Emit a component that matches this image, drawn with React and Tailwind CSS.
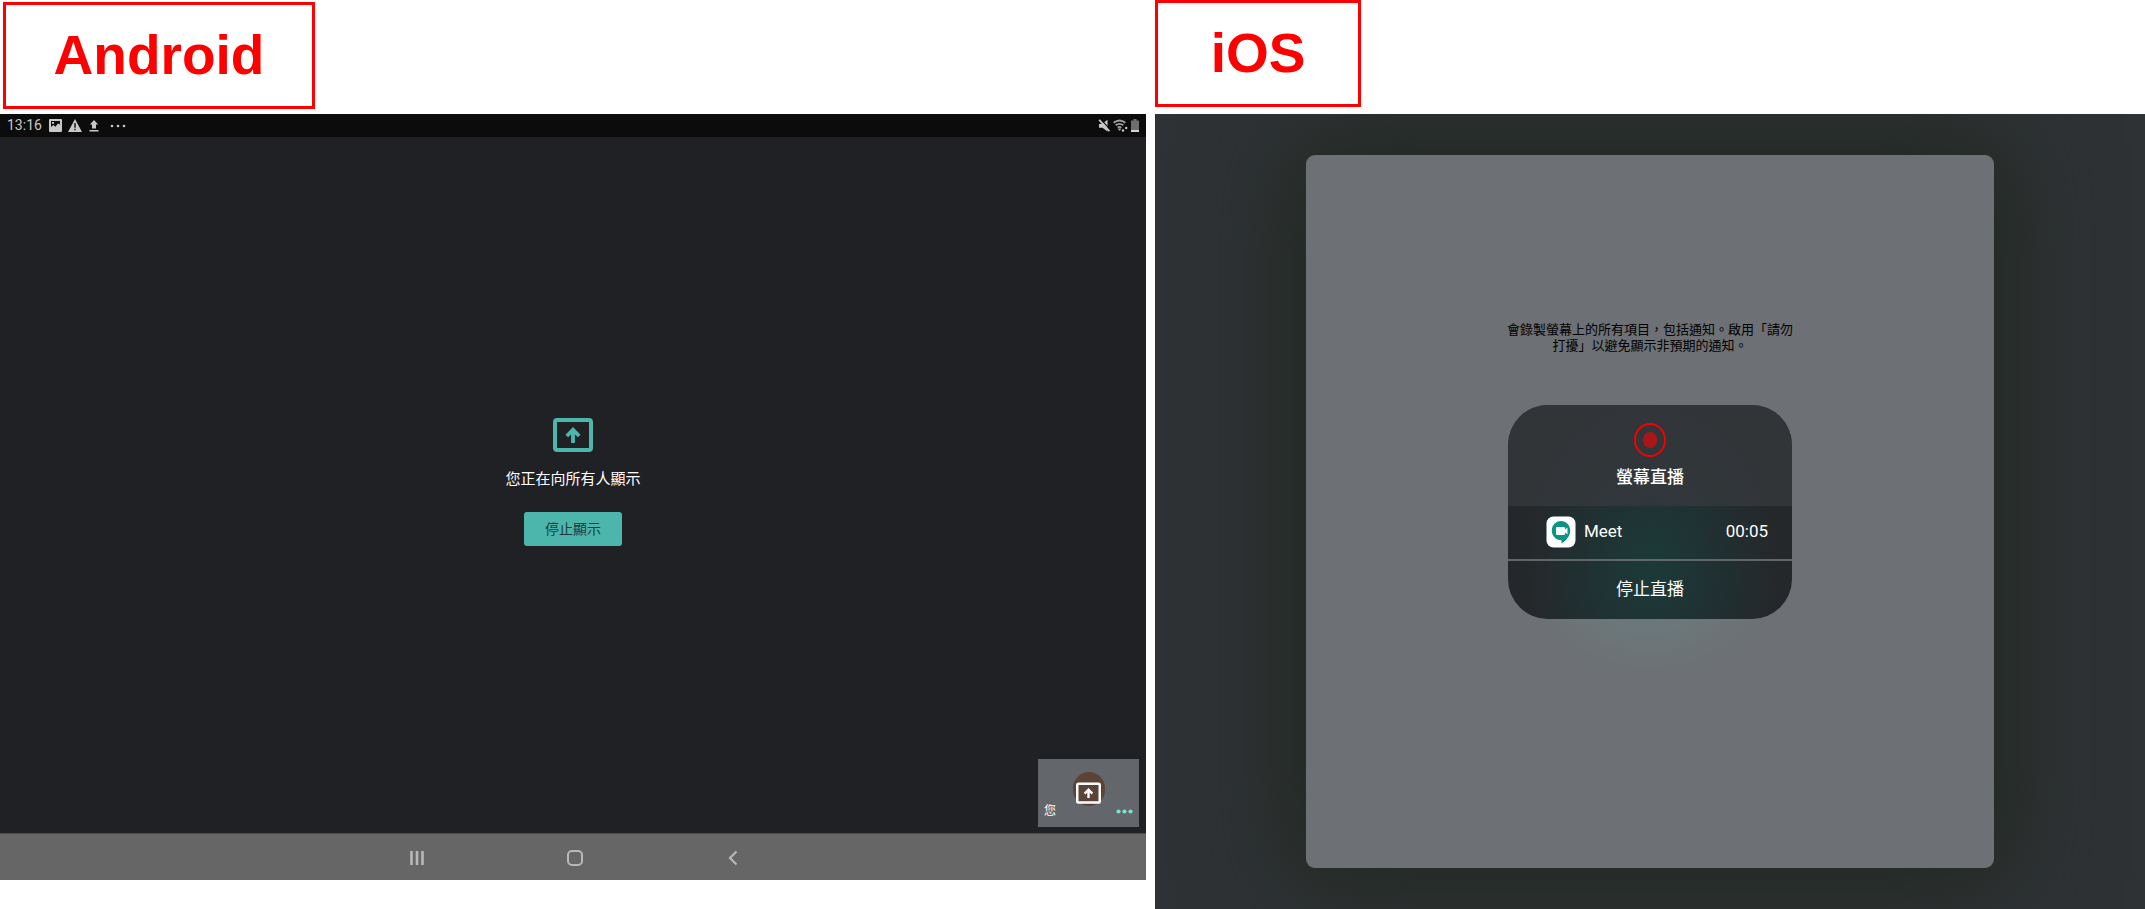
import React from "react";

function PlatformLabel({ children, className }) {
  return (
    <h2
      className={`flex h-[107px] items-center justify-center border-[3px] border-[#ff0000] text-[55px] leading-none font-bold text-[#ff0000] ${className}`}
    >
      {children}
    </h2>
  );
}

function PresentIcon({ className }) {
  return (
    <svg viewBox="0 0 40 34" className={className} fill="none" aria-hidden="true">
      <rect x="2" y="2" width="36" height="30" rx="2" stroke="currentColor" strokeWidth="4" />
      <path d="M20 25V12M13.800 18l6.200-6.200L26.200 18" stroke="currentColor" strokeWidth="3.800" />
    </svg>
  );
}

function StatusBar() {
  return (
    <div className="flex h-[23px] shrink-0 items-center justify-between bg-[#0c0c0c] px-[7px] text-[#c8c8c8]">
      <div className="flex items-center">
        <time className="mr-[7px] text-[14px] leading-[23px]">13:16</time>
        <svg viewBox="0 0 13 13" className="mr-[6px] size-[13px]" aria-hidden="true">
          <path
            fillRule="evenodd"
            fill="currentColor"
            d="M1 0h11q1 0 1 1v11q0 1-1 1H1q-1 0-1-1V1q0-1 1-1zM2 2v6l2.400-2 2 1.800L9 4.500l2 1V2zM3 3h2v1.800H3z"
          />
        </svg>
        <svg viewBox="0 0 14 13" className="mr-[7px] h-[13px] w-[14px]" aria-hidden="true">
          <path fill="currentColor" d="M7 0l7 13H0z" />
          <path stroke="#0c0c0c" strokeWidth="1.400" d="M7 4v4.700M7 9.800v1.500" />
        </svg>
        <svg viewBox="0 0 10 12" className="mr-[11px] h-[12px] w-[10px]" aria-hidden="true">
          <path fill="currentColor" d="M5 0l4.200 4.500H7V8.500H3V4.500H.8zM.5 10h9v1.500h-9z" />
        </svg>
        <svg viewBox="0 0 16 4" className="h-[4px] w-[16px]" fill="currentColor" aria-hidden="true">
          <circle cx="2" cy="2" r="1.300" />
          <circle cx="8" cy="2" r="1.300" />
          <circle cx="14" cy="2" r="1.300" />
        </svg>
      </div>
      <div className="flex items-center gap-[3px]">
        <svg viewBox="0 0 12 13" className="h-[13px] w-[12px]" aria-hidden="true">
          <path fill="currentColor" d="M1 5h3L9.500.8v11.700L4.500 8.800H1z" />
          <path d="M2.600 0l9.400 10.600" stroke="#0c0c0c" strokeWidth="1.200" />
          <path d="M1.200.8l10.300 11.400" stroke="currentColor" strokeWidth="1.800" />
        </svg>
        <svg viewBox="0 0 15 13" className="h-[13px] w-[15px]" fill="none" aria-hidden="true">
          <path d="M.6 3.800Q6.500-.8 12.400 3.800M2.600 6.300q3.900-3 7.800 0M4.700 8.600q1.800-1.400 3.600 0" stroke="#a0a0a0" strokeWidth="1.800" />
          <path d="M6.500 12L4.500 9.500h4z" fill="#a0a0a0" />
          <circle cx="10" cy="11.500" r="1.200" fill="currentColor" />
          <circle cx="13.200" cy="9" r="1.200" fill="currentColor" />
        </svg>
        <svg viewBox="0 0 8 13" className="h-[13px] w-[8px]" aria-hidden="true">
          <path fill="#6e6e6e" d="M2.500 0h3v1.500H8V13H0V1.500h2.500z" />
          <path fill="#d4d4d4" d="M0 11h8v2H0z" />
        </svg>
      </div>
    </div>
  );
}

function NavigationBar() {
  return (
    <nav className="flex h-[47px] shrink-0 items-center justify-center gap-[134px] border-t border-[#4c4c4c] bg-[#666666] pt-[2px] pl-[4px] text-[#b8b8b8]">
      <button type="button" aria-label="最近使用" className="flex size-[24px] items-center justify-center">
        <svg viewBox="0 0 14 14" className="size-[14px]" stroke="currentColor" strokeWidth="2.600" aria-hidden="true">
          <path d="M1.500 0v14M7 0v14M12.500 0v14" />
        </svg>
      </button>
      <button type="button" aria-label="首頁" className="flex size-[24px] items-center justify-center">
        <svg viewBox="0 0 16 16" className="size-[16px]" fill="none" stroke="currentColor" strokeWidth="2" aria-hidden="true">
          <rect x="1" y="1" width="14" height="14" rx="4" />
        </svg>
      </button>
      <button type="button" aria-label="返回" className="flex size-[24px] items-center justify-center">
        <svg viewBox="0 0 10 16" className="h-[16px] w-[10px]" fill="none" stroke="currentColor" strokeWidth="2.200" aria-hidden="true">
          <path d="M8.500 1.500L2 8l6.500 6.500" />
        </svg>
      </button>
    </nav>
  );
}

function SelfTile() {
  return (
    <div className="absolute right-[7px] bottom-[6px] flex h-[68px] w-[101px] items-end justify-between bg-[#63666a] px-[6px] pb-[8px]">
      <span className="text-[12px] leading-[16px] text-white">您</span>
      <span className="absolute top-[13px] left-1/2 flex h-[34px] w-[32px] -translate-x-1/2 items-center justify-center rounded-full bg-[#5b4436] pt-[8px] text-white">
        <PresentIcon className="h-[22px] w-[25px] shrink-0" />
      </span>
      <button type="button" aria-label="更多選項" className="flex h-[16px] items-center text-[#74e6cf]">
        <svg viewBox="0 0 17 5" className="h-[5px] w-[17px]" fill="currentColor" aria-hidden="true">
          <circle cx="2.500" cy="2.500" r="2.100" />
          <circle cx="8.500" cy="2.500" r="2.100" />
          <circle cx="14.500" cy="2.500" r="2.100" />
        </svg>
      </button>
    </div>
  );
}

function AndroidScreen() {
  return (
    <section className="mb-[29px] flex flex-1 flex-col bg-[#202125]">
      <StatusBar />
      <div className="relative flex flex-1 flex-col items-center justify-center pb-[6px]">
        <PresentIcon className="h-[34px] w-[40px] text-[#4db6ac]" />
        <p className="mt-[17px] text-[15px] leading-[20px] text-white">您正在向所有人顯示</p>
        <button
          type="button"
          className="mt-[23px] h-[34px] w-[98px] rounded-[3px] bg-[#4db6ac] text-[14px] text-[#1d3a38]"
        >
          停止顯示
        </button>
        <SelfTile />
      </div>
      <NavigationBar />
    </section>
  );
}

function MeetLogo() {
  return (
    <svg viewBox="0 0 30 32" className="h-[32px] w-[30px]" aria-hidden="true">
      <rect x="0.500" y="0.500" width="29" height="31" rx="7" fill="#ffffff" />
      <path fill="#0a9482" d="M15 5c5.200 0 9.200 4.300 9.200 9.600 0 5.400-3.700 9.900-8.700 12.900v-3.200C9.800 24.400 5.800 20 5.800 14.600 5.800 9.300 9.800 5 15 5z" />
      <path fill="#f4fbfa" d="M11 11h7q1 0 1 1v1.600l2.500-2.100v7L19 16.400V18q0 1-1 1h-7q-1 0-1-1v-6q0-1 1-1z" />
    </svg>
  );
}

function BroadcastCard() {
  return (
    <div className="w-[284px] overflow-hidden rounded-[40px] bg-[#25282b] bg-[radial-gradient(ellipse_125px_165px_at_50%_76%,#1b3a39_0%,#25282b_100%)] text-[17px] text-white">
      <div className="flex h-[101px] flex-col items-center bg-[#373a3e]/75 pt-[18px]">
        <svg viewBox="0 0 32 34" className="h-[34px] w-[32px]" aria-hidden="true">
          <ellipse cx="16" cy="17" rx="15" ry="16" fill="none" stroke="#f50000" strokeWidth="2" />
          <ellipse cx="16" cy="17" rx="7.200" ry="8" fill="#ab1719" />
        </svg>
        <h3 className="mt-[8px] leading-[24px] font-medium">螢幕直播</h3>
      </div>
      <div className="flex h-[53px] items-center pr-[24px] pl-[38px]">
        <MeetLogo />
        <span className="ml-[8px]">Meet</span>
        <time className="ml-auto">00:05</time>
      </div>
      <button type="button" className="block h-[60px] w-full border-t-2 border-[#616668]">
        停止直播
      </button>
    </div>
  );
}

function IosScreen() {
  return (
    <section className="flex flex-1 overflow-hidden bg-[#2f3235]">
      <div className="mx-[15.25%] my-[41px] grid flex-1 grid-rows-[1fr_auto_1fr] justify-items-center rounded-[9px] bg-[#6d7074] bg-[radial-gradient(ellipse_130px_110px_at_50%_58%,#698081_0%,#6d7074_100%)] shadow-[0_0_100px_20px_#222922]">
        <p className="self-end pb-[51px] text-center text-[13px] leading-[16px] text-black">
          會錄製螢幕上的所有項目，包括通知。啟用「請勿
          <br />
          打擾」以避免顯示非預期的通知。
        </p>
        <BroadcastCard />
      </div>
    </section>
  );
}

export default function App() {
  return (
    <main
      lang="zh-Hant"
      className="grid min-h-screen grid-cols-[1146fr_990fr] gap-[9px] bg-white font-[Roboto,'Noto_Sans_CJK_TC',sans-serif]"
    >
      <div className="flex flex-col">
        <div className="h-[114px] pt-[2px] pl-[3px] font-['Liberation_Sans',sans-serif]">
          <PlatformLabel className="w-[312px]">Android</PlatformLabel>
        </div>
        <AndroidScreen />
      </div>
      <div className="flex flex-col">
        <div className="h-[114px] font-['Liberation_Sans',sans-serif]">
          <PlatformLabel className="w-[206px]">iOS</PlatformLabel>
        </div>
        <IosScreen />
      </div>
    </main>
  );
}
